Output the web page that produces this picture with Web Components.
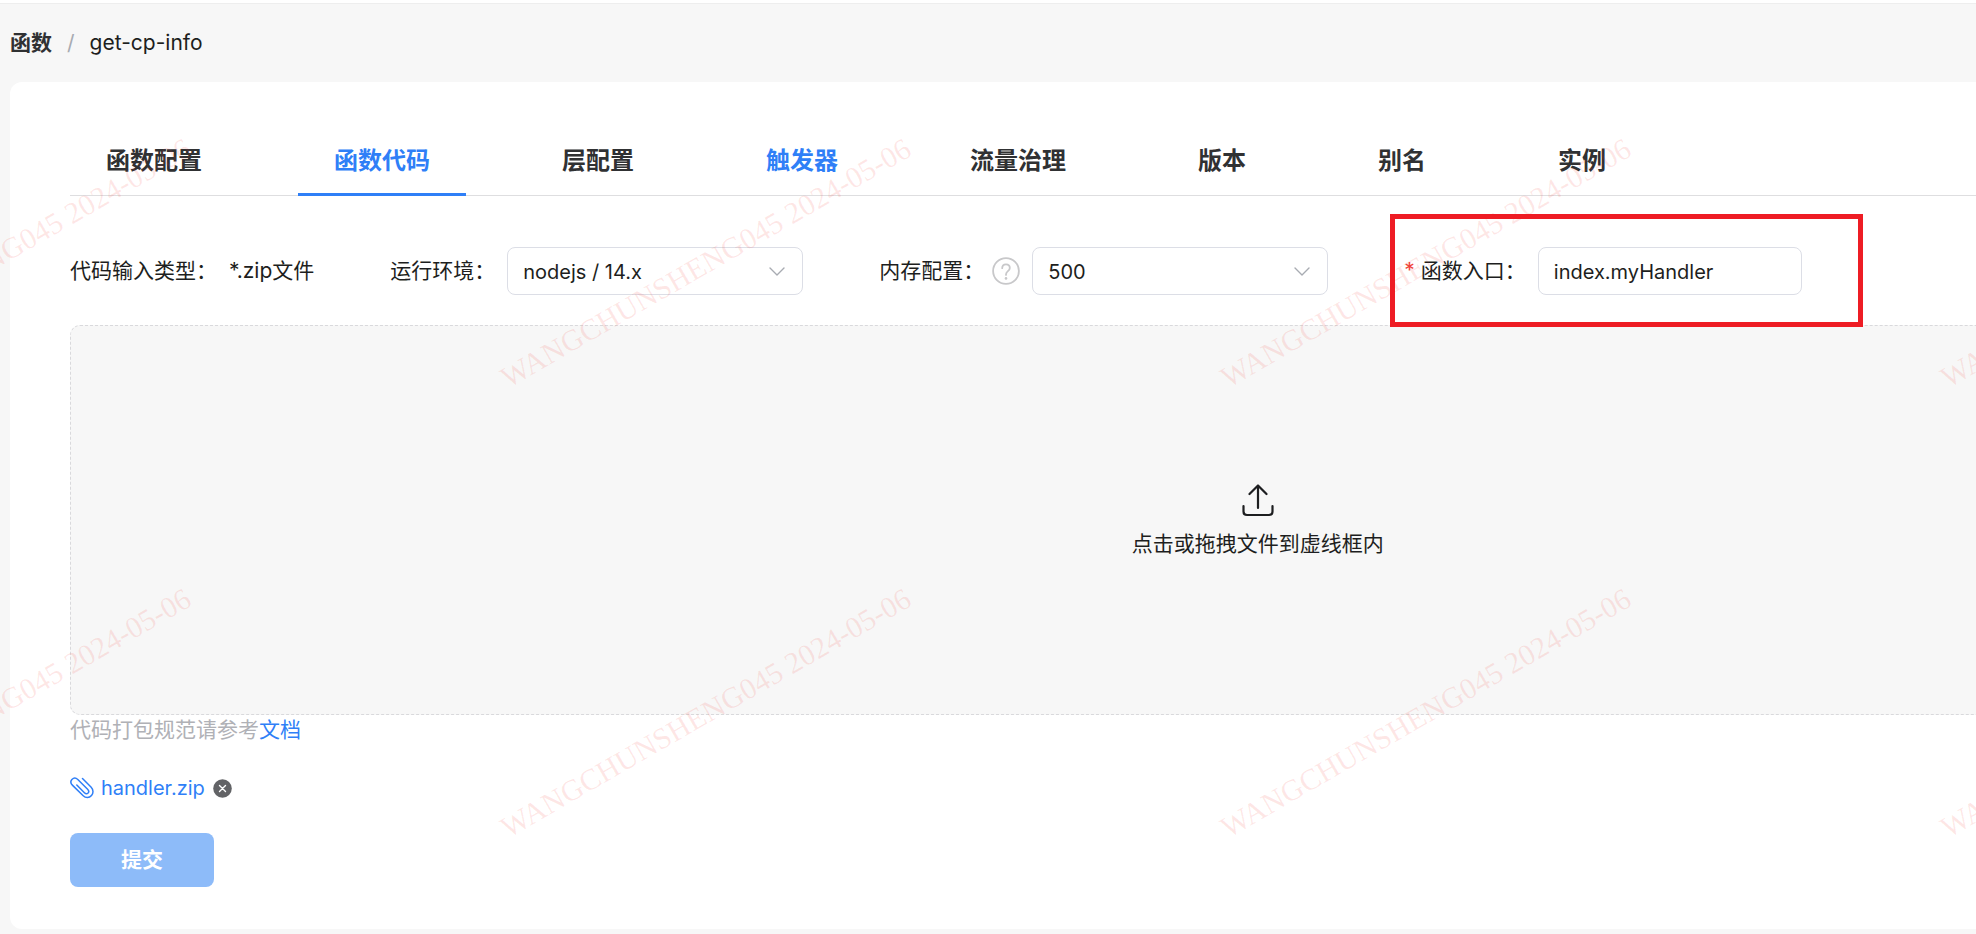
<!DOCTYPE html>
<html lang="zh-CN">
<head>
<meta charset="utf-8">
<title>get-cp-info</title>
<style>
  html { background: #f7f7f7; }
  body {
    margin: 0;
    overflow-x: hidden;
    font: 21px/30px Inter, "Noto Sans CJK SC", sans-serif;
    color: #1d1e20;
    --blue: #2f7ff7;
    --line: #dcdee6;
  }
</style>
</head>
<body>
<function-page></function-page>
<script>
const define = (name, html, setup) => {
  const template = document.createElement('template');
  template.innerHTML = html;
  customElements.define(name, class extends HTMLElement {
    constructor() {
      super();
      this.attachShadow({ mode: 'open' }).append(template.content.cloneNode(true));
    }
    connectedCallback() {
      if (setup) setup(this, this.shadowRoot);
    }
  });
};

define('bread-crumb', `
  <style>
    :host { display: block; border-top: 3px solid #fff; box-shadow: inset 0 1px #eee; }
    nav { display: flex; align-items: center; gap: 15px; height: 79px; padding-left: 10px; }
    a { color: #303133; font-weight: 700; text-decoration: none; }
    .sep { color: #a8abb2; }
  </style>
  <nav aria-label="breadcrumb"><a href="#functions">函数</a><span class="sep">/</span><span>get-cp-info</span></nav>
`);

define('tab-item', `
  <style>
    :host { display: block; }
    button {
      display: block; height: 72px; margin: 0; padding: 2px 36px 0; border: 0;
      background: none; color: #303133; font: inherit; font-size: 24px; font-weight: 700; cursor: pointer;
    }
    :host([highlight]) button { color: var(--blue); }
    :host([active]) button { box-shadow: inset 0 -3px var(--blue); }
  </style>
  <button type="button" role="tab"><slot></slot></button>
`, (el, root) => root.querySelector('button').setAttribute('aria-selected', el.hasAttribute('active')));

define('tab-bar', `
  <style>
    :host { display: flex; gap: 60px; box-shadow: inset 0 -1px #dedee0; }
  </style>
  <slot></slot>
`);

define('select-field', `
  <style>
    :host { display: flex; align-items: center; gap: 12px; white-space: nowrap; }
    .name { display: flex; align-items: center; gap: 8px; }
    .box { position: relative; width: 296px; }
    select {
      appearance: none; box-sizing: border-box; width: 100%; height: 48px; margin: 0; padding: 2px 48px 0 15px;
      border: 1px solid var(--line); border-radius: 8px; background: #fff; color: inherit; font: inherit;
      font-size: 20px;
    }
    .chevron { position: absolute; right: 18px; top: 16px; pointer-events: none; }
  </style>
  <span class="name"><label for="control"></label><slot></slot></span>
  <span class="box">
    <select id="control"><option></option></select>
    <svg class="chevron" width="16" height="16" viewBox="0 0 16 16" fill="none" stroke="#a8abb2" stroke-width="1.4" stroke-linecap="round" stroke-linejoin="round"><path d="M1 5l7 7 7-7"/></svg>
  </span>
`, (el, root) => {
  root.querySelector('label').textContent = el.getAttribute('label');
  root.querySelector('option').textContent = el.getAttribute('value');
});

define('text-field', `
  <style>
    :host { position: relative; display: flex; align-items: center; gap: 12px; white-space: nowrap; }
    .name { display: flex; align-items: center; gap: 6px; }
    .star { color: #f0443c; }
    input {
      box-sizing: border-box; width: 264px; height: 48px; margin: 0; padding: 2px 15px 0;
      border: 1px solid var(--line); border-radius: 8px; background: #fff; color: inherit; font: inherit;
      font-size: 20px;
    }
    /* marker frame drawn around the field */
    .frame { position: absolute; inset: -33px -61px -32px -14px; border: 5px solid #ee1c24; pointer-events: none; z-index: 3; }
  </style>
  <span class="name"><span class="star">*</span><label for="control"></label></span>
  <input id="control" type="text" required>
  <span class="frame"></span>
`, (el, root) => {
  root.querySelector('label').textContent = el.getAttribute('label');
  root.querySelector('input').value = el.getAttribute('value');
});

define('help-icon', `
  <style>:host { display: block; } svg { display: block; }</style>
  <svg width="28" height="28" viewBox="0 0 28 28" fill="none" stroke="#c8c8ca" stroke-width="1.8" stroke-linecap="round">
    <circle cx="14" cy="14" r="12.9"/>
    <path d="M10.2 11.2c0-2.3 1.6-3.9 3.8-3.9s3.8 1.5 3.8 3.6c0 3.1-3.8 3.3-3.8 6.5v.5"/>
    <circle cx="14" cy="21.4" r="1.3" fill="#c8c8ca" stroke="none"/>
  </svg>
`);

define('upload-zone', `
  <style>
    :host { display: block; }
    button {
      display: flex; flex-direction: column; align-items: center; justify-content: center; gap: 12px;
      box-sizing: border-box; width: 100%; height: 390px; margin: 0; padding: 2px 0 0;
      border: 1px dashed #d9d9dc; border-radius: 10px; background: #f7f7f7; color: inherit; font: inherit; cursor: pointer;
    }
    svg { display: block; }
  </style>
  <button type="button">
    <svg width="32" height="34" viewBox="0 0 32 34" fill="none" stroke="#1d1e20" stroke-width="2.2" stroke-linecap="round" stroke-linejoin="round">
      <path d="M16 25V2.5M7.5 11L16 2.5l8.5 8.5M1.5 23v5.5q0 3.500 3.500 3.500h22q3.500 0 3.500-3.500V23"/>
    </svg>
    <span><slot></slot></span>
  </button>
`);

define('file-item', `
  <style>
    :host { display: flex; align-items: center; gap: 8px; height: 30px; }
    a { display: flex; align-items: center; gap: 7px; color: var(--blue); font-size: 20px; text-decoration: none; }
    button { display: block; margin: 0; padding: 0; border: 0; background: none; cursor: pointer; }
    svg { display: block; }
  </style>
  <a href="#file">
    <svg width="24" height="22" viewBox="0 0 24 22" fill="none" stroke="currentColor" stroke-width="1.5" stroke-linecap="round" stroke-linejoin="round">
      <path d="M12.500 1.500L21.200 10.300C23.400 12.600 23.600 16.200 21.500 18.600C19.200 21.200 15.600 21.200 13.200 18.800L2.600 8.400C.500 6.400.400 4.200 1.900 2.500C3.600.800 6 .800 7.800 2.500L17.600 12.300C18.900 13.600 19.100 15 18.100 16C17.100 17 15.600 16.900 14.400 15.700L6.800 8"/>
    </svg>
    <slot></slot>
  </a>
  <button type="button" aria-label="remove">
    <svg width="19" height="19" viewBox="0 0 19 19"><circle cx="9.500" cy="9.500" r="9.300" fill="#626366"/><path d="M6.500 6.500l6 6m0-6l-6 6" stroke="#fff" stroke-width="1.400" stroke-linecap="round"/></svg>
  </button>
`);

define('submit-button', `
  <style>
    :host { display: block; }
    button {
      display: block; width: 144px; height: 54px; margin: 0; padding: 0; border: 0; border-radius: 8px;
      background: #8dbbf9; color: #fff; font: inherit; font-weight: 700;
    }
  </style>
  <button type="submit"><slot></slot></button>
`);

define('water-mark', `
  <style>
    :host { position: absolute; inset: 0; overflow: hidden; pointer-events: none; z-index: 2; }
    .grid {
      display: grid; grid-template-columns: repeat(4, 720px); grid-auto-rows: 450px; place-items: center;
      margin: 38px 0 0 -374px; font: 30px/36px "Liberation Serif", serif; color: rgba(245, 60, 50, .12);
    }
    span { white-space: nowrap; transform: rotate(-30deg); }
  </style>
  <div class="grid" aria-hidden="true"></div>
`, (el, root) => {
  const grid = root.querySelector('.grid');
  for (let i = 0; i < 8; i++) {
    const mark = document.createElement('span');
    mark.textContent = el.getAttribute('text');
    grid.append(mark);
  }
});

define('function-page', `
  <style>
    :host { display: block; position: relative; overflow: hidden; padding-bottom: 5px; }
    /* the workspace is wider than the window and is clipped at its right edge */
    main {
      box-sizing: border-box; width: 127vw; margin-left: 10px; padding: 42px 74px 42px 60px;
      border-radius: 12px; background: #fff;
    }
    .row { display: flex; align-items: center; gap: 76px; margin: 51px 0 30px; }
    .type { display: flex; gap: 12px; white-space: nowrap; }
    .hint { margin: 0 0 28px; color: #b0b1b6; }
    .hint a { color: var(--blue); text-decoration: none; }
    submit-button { margin-top: 30px; }
  </style>
  <bread-crumb></bread-crumb>
  <main>
    <tab-bar role="tablist">
      <tab-item>函数配置</tab-item>
      <tab-item active highlight>函数代码</tab-item>
      <tab-item>层配置</tab-item>
      <tab-item highlight>触发器</tab-item>
      <tab-item>流量治理</tab-item>
      <tab-item>版本</tab-item>
      <tab-item>别名</tab-item>
      <tab-item>实例</tab-item>
    </tab-bar>
    <div class="row">
      <div class="type"><span>代码输入类型：</span><span>*.zip文件</span></div>
      <select-field label="运行环境：" value="nodejs / 14.x"></select-field>
      <select-field label="内存配置：" value="500"><help-icon></help-icon></select-field>
      <text-field label="函数入口：" value="index.myHandler"></text-field>
    </div>
    <upload-zone>点击或拖拽文件到虚线框内</upload-zone>
    <p class="hint">代码打包规范请参考<a href="#docs">文档</a></p>
    <file-item>handler.zip</file-item>
    <submit-button>提交</submit-button>
  </main>
  <water-mark text="WANGCHUNSHENG045 2024-05-06"></water-mark>
`);
</script>
</body>
</html>
